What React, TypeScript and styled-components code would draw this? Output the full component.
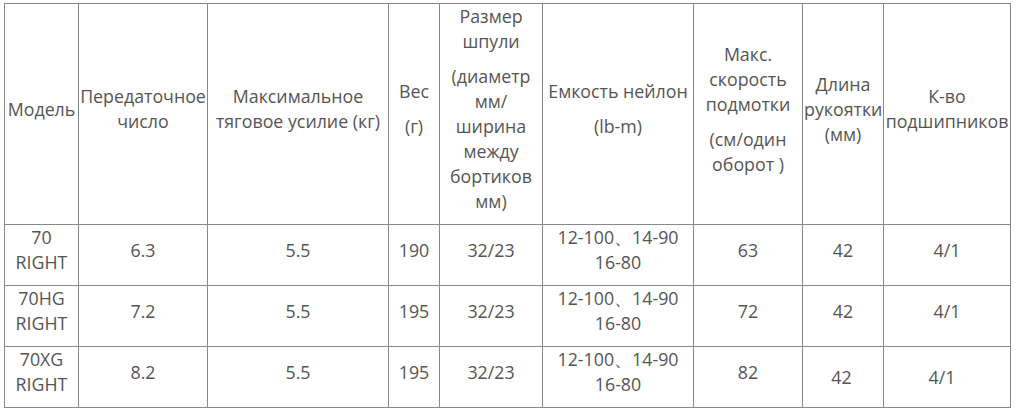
import React from "react";
import styled, { createGlobalStyle } from "styled-components";

const Global = createGlobalStyle`
  html, body { margin: 0; padding: 0; background: #fff; }
  body { font-family: "Open Sans", "Liberation Sans", sans-serif; }
`;

const Page = styled.div`
  padding: 3px 0 0 4px;
`;

const Table = styled.table`
  border-collapse: collapse;
  table-layout: fixed;
  width: 1006px;
  border: 1px solid #222;
  color: #555;
  font-size: 17.8px;
  line-height: 25px;
`;

const Cell = styled.td<{ $shift?: number }>`
  border: 1px solid #888;
  padding: 0 ${(p) => 1 + (p.$shift ?? 0)}px 0 1px;
  text-align: center;
  vertical-align: middle;
`;

const Para = styled.p<{ $flat?: boolean }>`
  margin: 0 0 ${(p) => (p.$flat ? 0 : 10)}px;
`;

const widths = [74, 129, 181, 51, 103, 151, 109, 81, 127];

// each cell: paragraphs; each paragraph: explicit lines (joined by <br/>)
const header: string[][][] = [
  [["Модель"]],
  [["Передаточное", "число"]],
  [["Максимальное", "тяговое усилие (кг)"]],
  [["Вес"], ["(г)"]],
  [["Размер", "шпули"], ["(диаметр", "мм/", "ширина", "между", "бортиков", "мм)"]],
  [["Емкость нейлон"], ["(lb-m)"]],
  [["Макс.", "скорость", "подмотки"], ["(см/один", "оборот )"]],
  [["Длина", "рукоятки", "(мм)"]],
  [["К-во", "подшипников"]],
];

type Row = { cells: string[][][]; flat?: number[]; shift?: Record<number, number> };

const cap = [["12-100、14-90", "16-80"]];

const rows: Row[] = [
  {
    cells: [[["70", "RIGHT"]], [["6.3"]], [["5.5"]], [["190"]], [["32/23"]], cap, [["63"]], [["42"]], [["4/1"]]],
  },
  {
    cells: [[["70HG", "RIGHT"]], [["7.2"]], [["5.5"]], [["195"]], [["32/23"]], cap, [["72"]], [["42"]], [["4/1"]]],
  },
  {
    cells: [[["70XG", "RIGHT"]], [["8.2"]], [["5.5"]], [["195"]], [["32/23"]], cap, [["82"]], [["42"]], [["4/1"]]],
    flat: [7, 8],
    shift: { 7: 3, 8: 10 },
  },
];

const HeaderRow = styled.tr`
  height: 221px;
`;

const BodyRow = styled.tr`
  height: 61px;
`;

function Lines({ lines }: { lines: string[] }) {
  return (
    <>
      {lines.map((l, k) => (
        <React.Fragment key={k}>
          {k > 0 && <br />}
          {l}
        </React.Fragment>
      ))}
    </>
  );
}

export default function App() {
  return (
    <>
      <Global />
      <Page>
        <Table>
          <colgroup>
            {widths.map((w, i) => (
              <col key={i} style={{ width: w }} />
            ))}
          </colgroup>
          <tbody>
            <HeaderRow>
              {header.map((c, i) => (
                <Cell key={i}>
                  {c.map((p, j) => (
                    <Para key={j}>
                      <Lines lines={p} />
                    </Para>
                  ))}
                </Cell>
              ))}
            </HeaderRow>
            {rows.map((r, ri) => (
              <BodyRow key={ri}>
                {r.cells.map((c, i) => (
                  <Cell key={i} $shift={r.shift?.[i]}>
                    {c.map((p, j) => (
                      <Para key={j} $flat={r.flat?.includes(i)}>
                        <Lines lines={p} />
                      </Para>
                    ))}
                  </Cell>
                ))}
              </BodyRow>
            ))}
          </tbody>
        </Table>
      </Page>
    </>
  );
}
